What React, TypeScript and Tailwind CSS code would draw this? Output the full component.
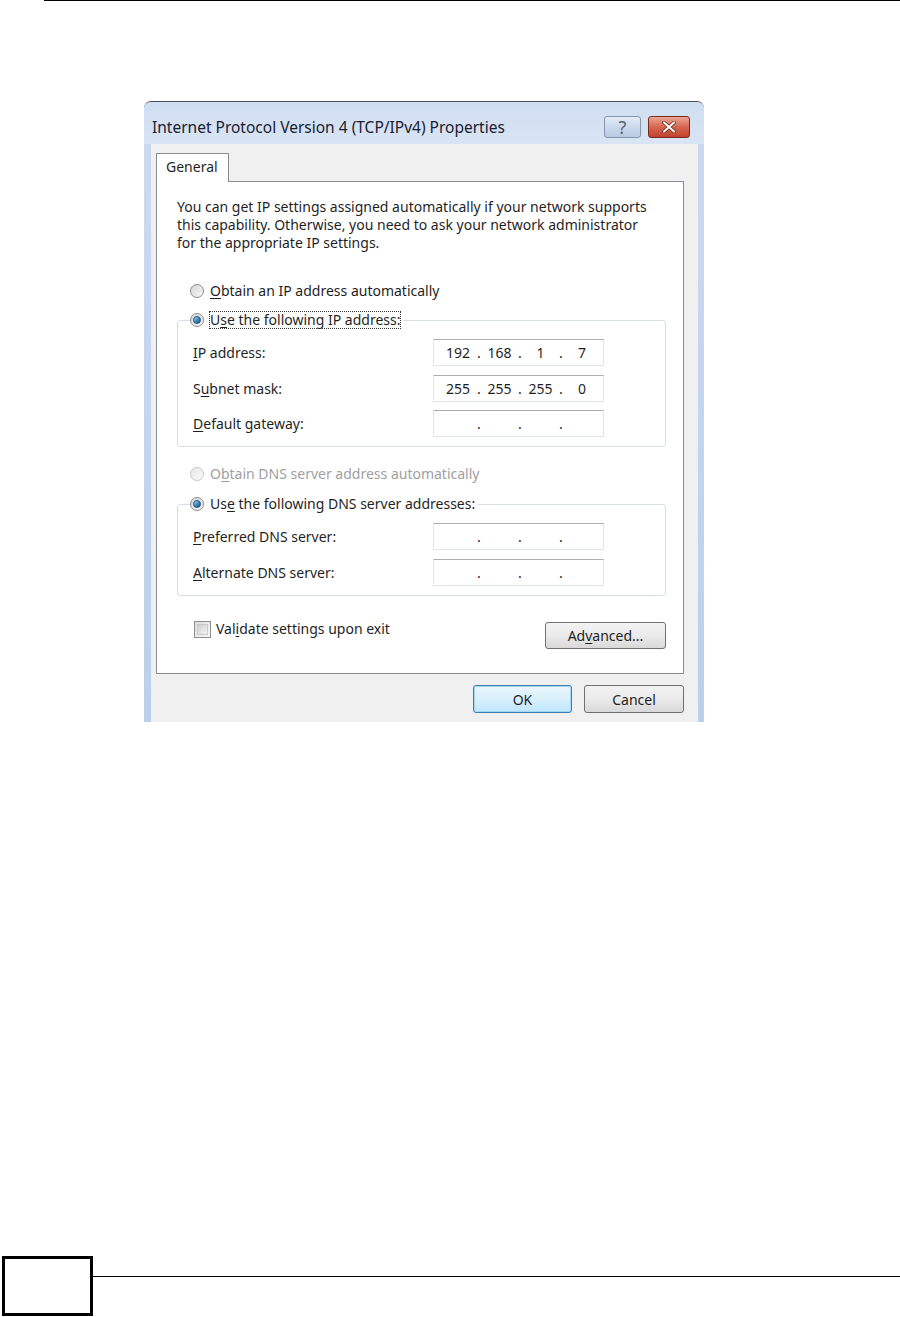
import React from "react";

const font = "font-['Noto_Sans',sans-serif]";

function U({ children }: { children: React.ReactNode }) {
  return <span className="underline underline-offset-[2px] decoration-1">{children}</span>;
}

function Radio({ checked, disabled }: { checked?: boolean; disabled?: boolean }) {
  return (
    <span
      className={`relative inline-flex h-[14px] w-[14px] shrink-0 items-center justify-center rounded-full border ${
        disabled
          ? "border-[#c8c8c8] bg-gradient-to-br from-[#e6e6e6] to-[#fbfbfb]"
          : "border-[#8a8a8a] bg-gradient-to-br from-[#d4d4d4] to-[#fafafa]"
      }`}
    >
      {checked && (
        <span className="h-[8px] w-[8px] rounded-full border border-[#1b4f7a] bg-gradient-to-br from-[#bfe2f7] via-[#3a8cc4] to-[#1d5d92]" />
      )}
    </span>
  );
}

function IpField({ values }: { values?: string[] }) {
  const v = values ?? ["", "", "", ""];
  return (
    <div className="flex h-[27px] w-[171px] items-center border border-[#e0e5ea] border-t-[#abadb3] bg-white pl-[6px] text-[14px] text-[#1f1f1f]">
      <span className="w-[36px] text-center">{v[0]}</span>
      <span className="w-[6px] text-center">.</span>
      <span className="w-[35px] text-center">{v[1]}</span>
      <span className="w-[6px] text-center">.</span>
      <span className="w-[35px] text-center">{v[2]}</span>
      <span className="w-[6px] text-center">.</span>
      <span className="w-[36px] text-center">{v[3]}</span>
    </div>
  );
}

function Row({ label, values, className }: { label: React.ReactNode; values?: string[]; className?: string }) {
  return (
    <div className={`flex h-[27px] items-center pl-[15px] ${className ?? ""}`}>
      <span className="w-[240px]">{label}</span>
      <IpField values={values} />
    </div>
  );
}

function Dialog() {
  return (
    <div className="ml-[144px] mt-[100px] flex h-[621px] w-[560px] flex-col overflow-hidden rounded-t-[7px] border-t border-[#4a4f57] bg-gradient-to-b from-[#c9daf0] via-[#c4d6ee] to-[#bccfe9]">
      {/* title bar */}
      <div className="flex h-[42px] shrink-0 items-start bg-gradient-to-b from-[#cfdef2] to-[#d9e5f5] pl-[8px] pr-[14px]">
        <span className="mt-[15px] flex-1 text-[15.5px] leading-[20px] text-[#1b2030]">
          Internet Protocol Version 4 (TCP/IPv4) Properties
        </span>
        <div className="mt-[14px] flex gap-[7px]">
          <div className="flex h-[22px] w-[37px] items-center justify-center rounded-[3px] border border-[#8595ad] bg-gradient-to-b from-[#e3ecf7] via-[#cbd9eb] to-[#b9cbe2] text-[18px] leading-none text-[#55657e]">
            ?
          </div>
          <div className="flex h-[22px] w-[42px] items-center justify-center rounded-[3px] border border-[#7d2a1e] bg-gradient-to-b from-[#e9a896] via-[#d56650] to-[#c2412b]">
            <svg width="14" height="12" viewBox="0 0 14 12">
              <path d="M2 1.5 L12 10.5 M12 1.5 L2 10.5" stroke="#5a1a10" strokeWidth="3.6" strokeLinecap="round" />
              <path d="M2 1.5 L12 10.5 M12 1.5 L2 10.5" stroke="#ffffff" strokeWidth="2.2" strokeLinecap="round" />
            </svg>
          </div>
        </div>
      </div>
      {/* client area */}
      <div className="ml-[7px] mr-[6px] flex flex-1 flex-col bg-[#f0f0f0] pl-[5px] pr-[14px] pt-[9px]">
        {/* tab */}
        <div className="relative z-10 -mb-px flex h-[29px] w-[73px] items-center border border-b-0 border-[#898c95] bg-white pb-[3px] pl-[9px] text-[14px] text-[#1f1f1f]">
          General
        </div>
        {/* panel */}
        <div className="flex h-[493px] flex-col border border-[#898c95] bg-white pl-[20px] pr-[17px] text-[14px] leading-[18px] text-[#1f1f1f]">
          <p className="mt-[16px] whitespace-nowrap">
            You can get IP settings assigned automatically if your network supports
            <br />
            this capability. Otherwise, you need to ask your network administrator
            <br />
            for the appropriate IP settings.
          </p>
          <div className="ml-[13px] mt-[29px] flex h-[20px] items-center gap-[6px]">
            <Radio />
            <span>
              <U>O</U>btain an IP address automatically
            </span>
          </div>
          <fieldset className="mt-[9px] rounded-[3px] border border-[#d5dfe5] pb-[9px] pr-[61px]">
            <legend className="ml-[12px] flex h-[20px] items-center gap-[6px] pr-[3px]">
              <Radio checked />
              <span className="outline-1 outline-dotted outline-[#333] leading-[16px]">
                U<U>s</U>e the following IP address:
              </span>
            </legend>
            <Row className="mt-[9px]" label={<><U>I</U>P address:</>} values={["192", "168", "1", "7"]} />
            <Row className="mt-[9px]" label={<>S<U>u</U>bnet mask:</>} values={["255", "255", "255", "0"]} />
            <Row className="mt-[8px]" label={<><U>D</U>efault gateway:</>} />
          </fieldset>
          <div className="ml-[13px] mt-[17px] flex h-[20px] items-center gap-[6px] text-[#a0a0a0]">
            <Radio disabled />
            <span>
              O<U>b</U>tain DNS server address automatically
            </span>
          </div>
          <fieldset className="mt-[10px] rounded-[3px] border border-[#d5dfe5] pb-[9px] pr-[61px]">
            <legend className="ml-[12px] flex h-[20px] items-center gap-[6px] pr-[3px]">
              <Radio checked />
              <span>
                Us<U>e</U> the following DNS server addresses:
              </span>
            </legend>
            <Row className="mt-[9px]" label={<><U>P</U>referred DNS server:</>} />
            <Row className="mt-[9px]" label={<><U>A</U>lternate DNS server:</>} />
          </fieldset>
          <div className="mt-[24px] flex items-start">
            <div className="ml-[17px] flex h-[18px] items-center gap-[5px]">
              <span className="h-[17px] w-[17px] border border-[#8f8f8f] bg-gradient-to-br from-[#dcdcdc] to-[#f8f8f8] p-[2px]">
                <span className="block h-full w-full border border-[#c9c9c9] bg-gradient-to-br from-[#d0d0d0] to-[#f4f4f4]" />
              </span>
              <span>
                Val<U>i</U>date settings upon exit
              </span>
            </div>
            <div className="ml-auto mt-[2px] flex h-[27px] w-[121px] items-center justify-center rounded-[3px] border border-[#707070] bg-gradient-to-b from-[#f3f3f3] via-[#ebebeb] to-[#d9d9d9]">
              Ad<U>v</U>anced...
            </div>
          </div>
        </div>
        {/* buttons */}
        <div className="mt-[11px] flex justify-end gap-[12px] text-[14px] text-[#1f1f1f]">
          <div className="flex h-[28px] w-[99px] items-center justify-center rounded-[3px] border border-[#3c7fb1] bg-gradient-to-b from-[#eaf6fd] via-[#d9f0fc] to-[#bee6fd] shadow-[0_0_0_1px_#a5d7f3_inset]">
            OK
          </div>
          <div className="flex h-[28px] w-[100px] items-center justify-center rounded-[3px] border border-[#707070] bg-gradient-to-b from-[#f3f3f3] via-[#ebebeb] to-[#d9d9d9]">
            Cancel
          </div>
        </div>
      </div>
    </div>
  );
}

export default function App() {
  return (
    <div className={`flex min-h-[1317px] w-[900px] flex-col bg-white ${font}`}>
      <div className="ml-[44px] h-px bg-black" />
      <Dialog />
      <div className="flex-1" />
      <div className="flex h-[61px] items-start">
        <div className="ml-[2px] h-[60px] w-[91px] border-[3px] border-black" />
        <div className="mt-[20px] h-px flex-1 bg-black" />
      </div>
    </div>
  );
}
